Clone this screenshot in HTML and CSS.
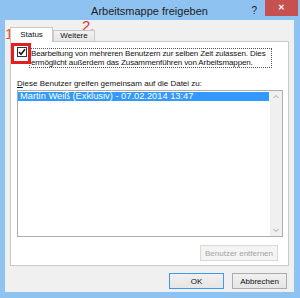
FILE: index.html
```html
<!DOCTYPE html>
<html lang="de">
<head>
    <meta charset="UTF-8">
    <title>Arbeitsmappe freigeben</title>
    <link rel="stylesheet" href="styles.css">
</head>
<body>
    <div class="window">
        <div class="titlebar">
            <span></span>
            <span class="title">Arbeitsmappe freigeben</span>
            <div class="controls">
                <span class="help">?</span>
                <span class="close">&#x2715;</span>
            </div>
        </div>

        <div class="client">
            <div class="tabs">
                <div class="tab active">Status</div>
                <div class="tab">Weitere</div>
            </div>

            <div class="page">
                <div class="option">
                    <svg class="check" width="10" height="10" viewBox="0 0 10 10">
                        <rect x="0.5" y="0.5" width="9" height="9" fill="#fff" stroke="#333"/>
                        <path d="M2 5 L4 7.3 L8 2.3" fill="none" stroke="#111" stroke-width="1.5"/>
                    </svg>
                    <span class="focus">Bearbeitung von mehreren Benutzern zur selben Zeit zulassen. Dies ermöglicht außerdem das Zusammenführen von Arbeitsmappen.</span>
                </div>

                <div class="label"><u>D</u>iese Benutzer greifen gemeinsam auf die Datei zu:</div>

                <div class="list">
                    <div class="rows">
                        <div class="row selected">Martin Weiß (Exklusiv) - 07.02.2014 13:47</div>
                    </div>
                    <div class="scrollbar">
                        <svg width="12" height="8" viewBox="0 0 12 8"><path d="M3.5 5 L6 2.5 L8.5 5" fill="none" stroke="#a6a6a6"/></svg>
                        <svg width="12" height="8" viewBox="0 0 12 8"><path d="M3.5 3 L6 5.5 L8.5 3" fill="none" stroke="#a6a6a6"/></svg>
                    </div>
                </div>

                <div class="page-actions">
                    <button class="btn" disabled>Benutzer entfernen</button>
                </div>
            </div>

            <div class="footer">
                <button class="btn default">OK</button>
                <button class="btn">Abbrechen</button>
            </div>
        </div>

        <!-- annotations drawn over the screenshot -->
        <span class="mark mark-1">1.</span>
        <span class="mark mark-2">2.</span>
        <span class="redbox"></span>
    </div>
</body>
</html>
```

FILE: styles.css
```css
body {
    margin: 0;
    font-family: "Liberation Sans", Arial, sans-serif;
}

.window {
    position: relative;
    width: 300px;
    height: 298px;
    background-color: #8ec3f1;
    padding: 0 6px 6px 5px;
    box-sizing: border-box;
    display: flex;
    flex-direction: column;
}

.titlebar {
    height: 20px;
    display: grid;
    grid-template-columns: 1fr auto 1fr;
    align-items: start;
}
.title {
    font-size: 11px;
    color: #222;
    line-height: 22px;
}
.controls {
    display: flex;
    justify-content: flex-end;
    margin-right: -4px;
}
.help {
    font-size: 10px;
    color: #222;
    line-height: 22px;
    margin-right: 8px;
}
.close {
    width: 33px;
    height: 16px;
    background-color: #c75050;
    color: #fff;
    font-size: 8px;
    font-weight: bold;
    text-align: center;
    line-height: 16px;
}

.client {
    flex: 1;
    background-color: #f0f0f0;
    padding: 7px 5px 0 5px;
    display: flex;
    flex-direction: column;
}

.tabs {
    display: flex;
    align-items: flex-end;
    height: 14px;
    position: relative;
    z-index: 1;
}
.tab {
    font-size: 8px;
    color: #111;
    border: 1px solid #c8c8c8;
    border-bottom: none;
    background: linear-gradient(#f2f2f2, #e6e6e6);
    height: 10px;
    line-height: 10px;
    padding: 0 6px;
    width: 28px;
    text-align: center;
}
.tab.active {
    background: #fff;
    height: 14px;
    line-height: 14px;
    width: 29px;
    margin-bottom: -1px;
}

.page {
    background-color: #fff;
    border: 1px solid #c8c8c8;
    height: 225px;
    box-sizing: border-box;
    padding: 5px 5px 0 6px;
    display: flex;
    flex-direction: column;
    font-size: 8px;
    color: #111;
}

.option {
    display: flex;
    align-items: flex-start;
    gap: 2px;
}
.check {
    flex: none;
}
.focus {
    width: 243px;
    box-sizing: border-box;
    border: 1px dotted #555;
    padding: 0 1px;
    margin-top: 1px;
    line-height: 9px;
    height: 20px;
    letter-spacing: -0.12px;
}

.label {
    margin-top: 11px;
    line-height: 10px;
}

.list {
    margin-top: 1px;
    height: 147px;
    border: 1px solid #abadb3;
    box-sizing: border-box;
    display: flex;
}
.rows {
    flex: 1;
    padding: 1px 1px 0 0;
}
.row {
    height: 9px;
    line-height: 9px;
    padding-left: 2px;
    font-size: 9.3px;
}
.row.selected {
    background-color: #3399ff;
    color: #fff;
}
.scrollbar {
    width: 12px;
    background-color: #f0f0f0;
    display: flex;
    flex-direction: column;
    justify-content: space-between;
    padding: 2px 0;
}

.page-actions {
    display: flex;
    justify-content: flex-end;
    margin-top: 8px;
    padding-right: 5px;
}

.btn {
    font-family: inherit;
    font-size: 8px;
    height: 16px;
    padding: 0;
    border: 1px solid #acacac;
    background: linear-gradient(#f0f0f0, #e5e5e5);
    color: #111;
}
.btn:disabled {
    width: 78px;
    border-color: #d9d9d9;
    background: #f4f4f4;
    color: #a3a3a3;
}

.footer {
    display: flex;
    justify-content: flex-end;
    gap: 8px;
    margin-top: 7px;
    margin-right: 2px;
}
.footer .btn {
    width: 55px;
}
.btn.default {
    border-color: #3c9bef;
}

.mark {
    position: absolute;
    color: #ef4a1f;
    font-size: 15px;
    line-height: 15px;
}
.mark-1 {
    left: 5px;
    top: 26px;
}
.mark-2 {
    left: 82px;
    top: 18px;
    color: #e8302a;
}
.redbox {
    position: absolute;
    left: 11px;
    top: 43px;
    width: 20px;
    height: 21px;
    box-sizing: border-box;
    border: 3px solid #e41f1f;
}
```
